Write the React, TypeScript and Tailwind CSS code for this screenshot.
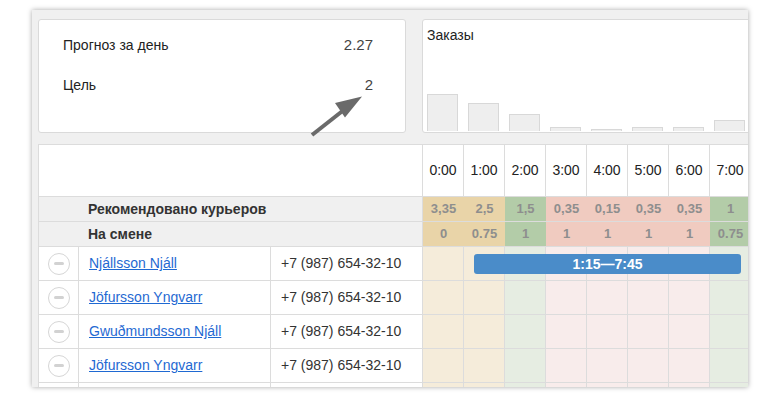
import React from 'react'

const hours = ['0:00', '1:00', '2:00', '3:00', '4:00', '5:00', '6:00', '7:00']
const recommended = ['3,35', '2,5', '1,5', '0,35', '0,15', '0,35', '0,35', '1']
const onShift = ['0', '0.75', '1', '1', '1', '1', '1', '0.75']
const tones = ['o', 'o', 'g', 'p', 'p', 'p', 'p', 'g'] as const
const bars = [37, 28, 17, 4, 2, 4, 4, 11]

const strong: Record<string, string> = {
  o: 'bg-[#e9d4a8]',
  g: 'bg-[#b3cca8]',
  p: 'bg-[#f0cbc0]',
}
const light: Record<string, string> = {
  o: 'bg-[#f5ecda]',
  g: 'bg-[#e6ede2]',
  p: 'bg-[#f8eceb]',
}

// last one is cut by the frame, only its lines show
const couriers = ['Njállsson Njáll', 'Jöfursson Yngvarr', 'Gwuðmundsson Njáll', 'Jöfursson Yngvarr', '']

function MinusButton() {
  return (
    <div className="flex h-[22px] w-[22px] items-center justify-center rounded-full border border-[#d6d6d6] bg-white">
      <div className="h-[3px] w-[10px] rounded-sm bg-[#d2d2d2]" />
    </div>
  )
}

function SummaryRow({ label, values }: { label: string; values: string[] }) {
  return (
    <div className="flex h-[25px] border-b border-[#dcdcdc]">
      <div className="flex w-[384px] shrink-0 items-center border-r border-[#dcdcdc] bg-[#f0f0f0] pl-[49px] text-[14px] font-bold text-[#333]">
        {label}
      </div>
      {values.map((v, i) => (
        <div
          key={i}
          className={`flex w-[41px] shrink-0 items-center justify-center text-[13px] font-bold text-[#8e8e8e] ${strong[tones[i]]}`}
        >
          {v}
        </div>
      ))}
    </div>
  )
}

export default function App() {
  return (
    <div className="h-[397px] w-[780px] overflow-hidden bg-white font-['Liberation_Sans',Arial,sans-serif]">
      <div className="relative ml-[32px] mt-[10px] h-[377px] w-[716px] overflow-hidden bg-[#f0f0f0] pl-[6px] pt-[9px] shadow-[0_0_5px_rgba(0,0,0,0.35)]">
        {/* Top cards */}
        <div className="flex h-[114px] gap-[16px]">
          <div className="w-[368px] shrink-0 rounded-[3px] border border-[#dadada] bg-white pl-[24px] pr-[32px] pt-[5px] text-[14px] text-[#222]">
            <div className="flex h-[40px] items-center justify-between">
              <span>Прогноз за день</span>
              <span className="text-[15px] text-[#444]">2.27</span>
            </div>
            <div className="flex h-[40px] items-center justify-between">
              <span>Цель</span>
              <span className="text-[15px] text-[#444]">2</span>
            </div>
          </div>

          <div className="flex w-[340px] shrink-0 flex-col rounded-[3px] border border-[#dadada] bg-white">
            <div className="pl-[4px] pt-[7px] text-[14px] leading-[16px] text-[#222]">Заказы</div>
            <div className="mt-auto flex items-end gap-[10px] pb-[1px] pl-[4px]">
              {bars.map((h, i) => (
                <div
                  key={i}
                  className="w-[31px] border border-b-0 border-[#d8d8d8] bg-[#eeeeee]"
                  style={{ height: h }}
                />
              ))}
            </div>
          </div>
        </div>

        {/* Schedule table */}
        <div className="mt-[11px] w-[713px] border-l border-t border-[#dcdcdc] bg-white text-[14px] text-[#222]">
          <div className="flex h-[52px] border-b border-[#dcdcdc]">
            <div className="w-[384px] shrink-0 border-r border-[#dcdcdc]" />
            {hours.map(h => (
              <div
                key={h}
                className="flex w-[41px] shrink-0 items-center justify-center border-r border-[#dcdcdc]"
              >
                {h}
              </div>
            ))}
          </div>

          <SummaryRow label="Рекомендовано курьеров" values={recommended} />
          <SummaryRow label="На смене" values={onShift} />

          {couriers.map((name, r) => (
            <div key={r} className="flex h-[34px] border-b border-[#dcdcdc]">
              <div className="flex w-[40px] shrink-0 items-center justify-center border-r border-[#dcdcdc]">
                {name && <MinusButton />}
              </div>
              <div className="flex w-[192px] shrink-0 items-center border-r border-[#dcdcdc] pl-[10px]">
                {name && (
                  <a href="#" className="text-[#1f69d2] underline">
                    {name}
                  </a>
                )}
              </div>
              <div className="flex w-[152px] shrink-0 items-center border-r border-[#dcdcdc] pl-[10px] text-[#333]">
                {name && '+7 (987) 654-32-10'}
              </div>
              <div className="relative flex">
                {tones.map((t, i) => (
                  <div key={i} className={`w-[41px] shrink-0 border-r border-[#dcdcdc] ${light[t]}`} />
                ))}
                {r === 0 && (
                  <div className="absolute left-[51px] top-[7px] flex h-[20px] w-[267px] items-center justify-center rounded-[3px] bg-[#4a8cc9] text-[14px] font-bold text-white">
                    1:15—7:45
                  </div>
                )}
              </div>
            </div>
          ))}
        </div>

        {/* Annotation arrow */}
        <svg
          className="pointer-events-none absolute left-[268px] top-[80px]"
          width="70"
          height="50"
          viewBox="0 0 70 50"
        >
          <line x1="12" y1="45" x2="45" y2="19" stroke="#6a6a6a" strokeWidth="4" />
          <polygon points="62,6.5 35,13 45,27.5" fill="#6a6a6a" />
        </svg>
      </div>
    </div>
  )
}
